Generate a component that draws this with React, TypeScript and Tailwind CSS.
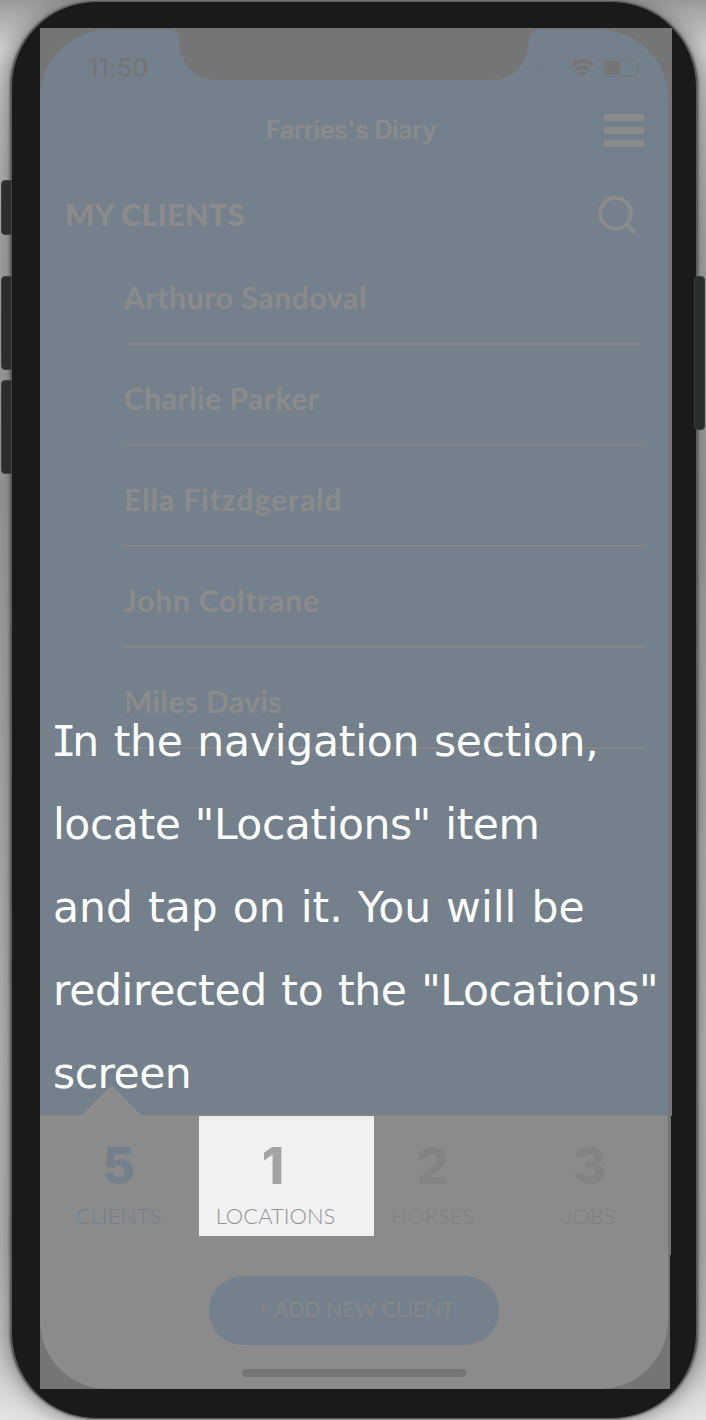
import React from "react";

const clients = [
  { name: "Arthuro Sandoval", tracking: "tracking-[0.65px]" },
  { name: "Charlie Parker", tracking: "tracking-[0.5px]" },
  { name: "Ella Fitzdgerald", tracking: "tracking-[0.95px]" },
  { name: "John Coltrane", tracking: "tracking-[0.8px]" },
  { name: "Miles Davis", tracking: "tracking-[0.4px]" },
];

function StatusBar() {
  return (
    <div className="flex h-[50px] items-start">
      <div className="w-[139px] shrink-0 pl-[48px] pt-[20px] font-['Inter'] text-[25px] leading-9 font-medium tracking-[0.1px] text-[#757575]">
        11:50
      </div>
      <svg className="h-[50px] w-[352px] shrink-0 overflow-visible" viewBox="0 0 352 50">
        <path d="M-8 0Q0 1 0 9C1 34 15 50 39 50H312C336 50 349 34 350 9Q351 1 358 0Z" fill="#757575" />
      </svg>
    </div>
  );
}

function StatusIcons() {
  return (
    <svg className="absolute top-[27px] left-[494px] h-[24px] w-[112px]" viewBox="0 0 112 24">
      <g fill="#717e88">
        <circle cx="4" cy="16.3" r="2.5" />
        <circle cx="11.7" cy="16.3" r="2.5" />
        <circle cx="19.4" cy="16.3" r="2.5" />
        <circle cx="27" cy="16.3" r="2.5" />
      </g>
      <g fill="none" stroke="#757575" strokeWidth="3.7">
        <path d="M37.9 8.3Q48.5-1 59.2 8.3" />
        <path d="M42 12.6Q48.5 7.2 55 12.6" />
      </g>
      <path d="M44.2 16Q48.5 12.6 52.8 16L48.5 20Z" fill="#757575" />
      <rect x="69.2" y="2.3" width="34.4" height="17" rx="4" fill="none" stroke="#747b81" strokeWidth="1.5" />
      <rect x="71" y="4" width="15.3" height="13.3" rx="2.2" fill="#757575" />
      <path d="M105.5 8Q109.5 10.8 105.5 13.6Z" fill="#747b81" />
    </svg>
  );
}

function Stat({ value, label, num, lab }: { value: string; label: string; num: string; lab: string }) {
  return (
    <div className="flex w-[157px] flex-col items-center pt-[22px]">
      <div className={"h-[56px] leading-[56px] font-['Inter'] text-[51px] font-extrabold " + num}>{value}</div>
      <div className={"mt-[8px] whitespace-nowrap leading-7 font-['Lato'] text-[22px] font-light " + lab}>{label}</div>
    </div>
  );
}

export default function App() {
  return (
    <div className="relative h-[1420px] w-[706px] overflow-hidden bg-[linear-gradient(180deg,#9a9a9a_0px,#d4d4d4_50px,#c0c0c0_120px,#a8a8a8_240px,#9c9c9c_500px,#acacac_750px,#bcbcbc_1050px,#b8b8b8_1250px,#cccccc_1360px,#e4e4e4_1420px)]">
      <div className="absolute top-[180px] left-[1px] z-10 h-[55px] w-[11px] rounded-l-[4px] border border-[#404242] bg-[#2c2d2d]" />
      <div className="absolute top-[276px] left-[1px] z-10 h-[94px] w-[11px] rounded-l-[4px] border border-[#404242] bg-[#2c2d2d]" />
      <div className="absolute top-[380px] left-[1px] z-10 h-[94px] w-[11px] rounded-l-[4px] border border-[#404242] bg-[#2c2d2d]" />

      <div className="relative mt-px ml-[10px] flex h-[1418px] w-[688px] flex-col rounded-[86px] border-x-2 border-y border-[#5c5c5c] bg-[#1a1a1a] pt-[26px] pl-[28px] shadow-[0_0_3px_0_#555,0_0_26px_0_#707070]">
        <div className="h-[1088px] w-[632px] bg-[#757575] pt-[2px]">
          <div className="relative h-[1085px] w-[628px] overflow-hidden rounded-t-[68px] bg-[#74808b]">
            <StatusBar />
            <StatusIcons />
            <header className="flex h-[84px] items-center border-b border-[#7a8288] pt-[18px]">
              <h1 className="ml-[226px] w-[338px] font-['Inter'] text-[25px] font-semibold tracking-[-0.35px] text-[#8b8b8b]">Farries's Diary</h1>
              <div className="flex flex-col gap-[6px]">
                <span className="h-[7px] w-[40px] rounded-[2px] bg-[#8b8b8b]" />
                <span className="h-[7px] w-[40px] rounded-[2px] bg-[#8b8b8b]" />
                <span className="h-[7px] w-[40px] rounded-[2px] bg-[#8b8b8b]" />
              </div>
            </header>
            <div className="flex h-[80px] items-center justify-between pr-[30px] pl-[25px] pt-[20px]">
              <h2 className="font-['Lato'] text-[31px] font-black text-[#8b8b8b]">MY CLIENTS</h2>
              <svg className="h-[40px] w-[40px]" viewBox="0 0 40 40" fill="none" stroke="#8b8b8b" strokeWidth="3.7" strokeLinecap="round">
                <circle cx="17.5" cy="19.3" r="15.4" />
                <path d="M29.5 31L36 37.7" />
              </svg>
            </div>
            <ul className="pr-[24px] pl-[84px]">
              {clients.map((c) => (
                <li key={c.name} className={"flex h-[101px] items-center border-b-[2px] border-[#848688] pt-[8px] font-['Lato'] text-[30px] font-bold text-[#8b8b8b] " + c.tracking}>
                  {c.name}
                </li>
              ))}
            </ul>
          </div>
          <div className="h-px w-[628px] bg-[#858686]" />
        </div>
        <nav className="relative h-[139px] w-[631px] bg-[#757575]">
          <div className="flex h-full w-[628px] bg-[#8b8b8b]">
            <Stat value="5" label="CLIENTS" num="text-[#74808b]" lab="text-[#6f7f8e]" />
            <Stat value="1" label="LOCATIONS" num="relative z-10 pr-[5px] text-[#a3a3a3]" lab="relative z-10 text-[#949494]" />
            <Stat value="2" label="HORSES" num="text-[#838383]" lab="text-[#808080]" />
            <Stat value="3" label="JOBS" num="text-[#838383]" lab="text-[#808080]" />
          </div>
          <div className="absolute top-0 left-[159px] h-[120px] w-[175px] bg-linear-to-b from-[#e9e9e9] to-[#f1f1f1] to-5%" />
          <svg className="absolute top-[-31px] left-[40px] h-[31px] w-[64px]" viewBox="0 0 64 31">
            <path d="M1 31L29.5 2Q31.5 0 33.5 2L62 31Z" fill="#8b8b8b" />
          </svg>
        </nav>
        <footer className="flex h-[134px] w-[630px] bg-[#757575]">
          <div className="flex w-[628px] flex-col items-center rounded-b-[68px] bg-[#8b8b8b] pt-[21px]">
            <button className="h-[69px] w-[290px] rounded-full bg-[#74808b] pb-[3px] pl-[3px] font-['Lato'] text-[21px] tracking-[0.15px] text-[#868889]">+ ADD NEW CLIENT</button>
            <div className="mt-[24px] h-[8px] w-[224px] rounded-full bg-[#757575]" />
          </div>
        </footer>
      </div>
      <div className="absolute top-[276px] left-[694px] h-[154px] w-[11px] rounded-[4px] border border-[#383939] bg-[#2c2d2d]" />

      <p className="absolute top-[700px] left-[53px] z-20 font-['DejaVu_Sans'] text-[42.5px] leading-[83px] whitespace-nowrap text-white [word-spacing:1.4px]">
        <span className="block h-[83px] tracking-[-0.25px]">
          <span className="-mr-[4px] -ml-[2px] font-['DejaVu_Sans_Mono']">I</span>n the navigation section,
        </span>
        <span className="block tracking-[-0.45px]">locate "Locations" item</span>
        <span className="block tracking-[0.04px]">and tap on it. You will be</span>
        <span className="block tracking-[-0.35px]">redirected to the "Locations"</span>
        <span className="block tracking-[-0.5px]">screen</span>
      </p>
    </div>
  );
}
